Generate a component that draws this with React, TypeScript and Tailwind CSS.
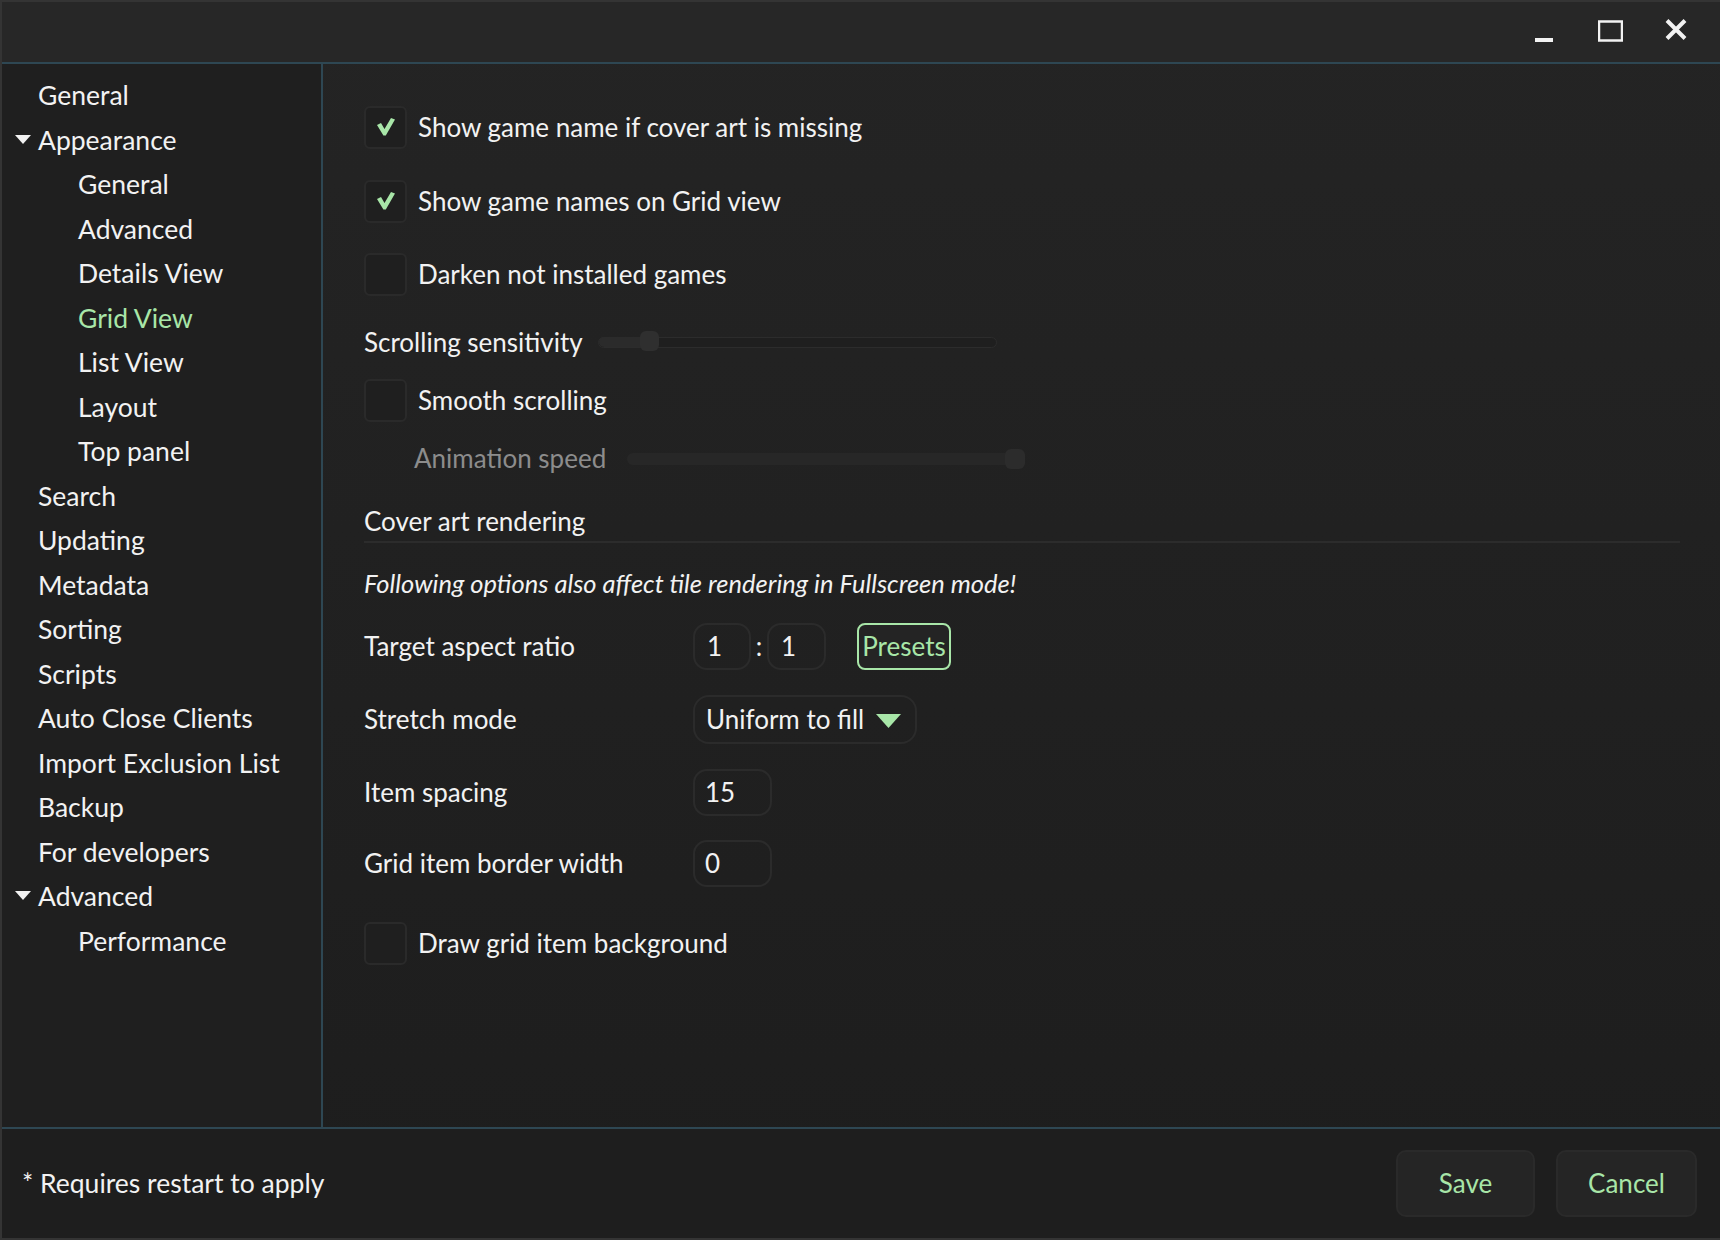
import React from "react";

function Check() {
  return (
    <svg width="18" height="18" viewBox="0 0 18 18">
      <polygon points="0,7 4,5 7.5,11 14,0 18,1.5 8.8,17.5 6.4,17.5" fill="#a8e6a8" />
    </svg>
  );
}

function CheckBox({ checked, label }: { checked?: boolean; label: string }) {
  return (
    <div className="flex items-center h-full">
      <div className="w-[43px] h-[43px] rounded-[6px] border-2 border-[#2a2a2a] bg-[#1f1f1f] flex items-center justify-center shrink-0">
        {checked ? <Check /> : null}
      </div>
      <span className="ml-[11px]">{label}</span>
    </div>
  );
}

function Tri({ color = "#f2f2f2" }: { color?: string }) {
  return (
    <svg width="16" height="9" viewBox="0 0 16 9">
      <polygon points="0,0 16,0 8,9" fill={color} />
    </svg>
  );
}

const nav: { t: string; lvl: 0 | 1; exp?: boolean; sel?: boolean }[] = [
  { t: "General", lvl: 0 },
  { t: "Appearance", lvl: 0, exp: true },
  { t: "General", lvl: 1 },
  { t: "Advanced", lvl: 1 },
  { t: "Details View", lvl: 1 },
  { t: "Grid View", lvl: 1, sel: true },
  { t: "List View", lvl: 1 },
  { t: "Layout", lvl: 1 },
  { t: "Top panel", lvl: 1 },
  { t: "Search", lvl: 0 },
  { t: "Updating", lvl: 0 },
  { t: "Metadata", lvl: 0 },
  { t: "Sorting", lvl: 0 },
  { t: "Scripts", lvl: 0 },
  { t: "Auto Close Clients", lvl: 0 },
  { t: "Import Exclusion List", lvl: 0 },
  { t: "Backup", lvl: 0 },
  { t: "For developers", lvl: 0 },
  { t: "Advanced", lvl: 0, exp: true },
  { t: "Performance", lvl: 1 },
];

export default function App() {
  return (
    <div className="w-[1720px] h-[1240px] flex flex-col bg-gradient-to-b from-[#242424] to-[#1d1d1d] border-l-2 border-t-2 border-b-2 border-[#343434] font-['Lato',sans-serif] text-[#f2f2f2] text-[26px] overflow-hidden">
      {/* Title bar */}
      <header className="h-[62px] shrink-0 flex items-start justify-end pr-[33px] bg-[#272727] border-b-2 border-[#2e4753]">
        <svg className="mt-[36px]" width="18" height="4" viewBox="0 0 18 4">
          <rect x="0" y="0" width="18" height="4" fill="#f2f2f2" />
        </svg>
        <svg className="mt-[18px] ml-[45px]" width="25" height="22" viewBox="0 0 25 22">
          <rect x="1" y="1.5" width="23" height="19" fill="none" stroke="#f2f2f2" strokeWidth="2.5" />
        </svg>
        <svg className="mt-[17px] ml-[42px]" width="22" height="21" viewBox="0 0 22 21">
          <path d="M2 1.5 L20 19.5 M20 1.5 L2 19.5" stroke="#f2f2f2" strokeWidth="4" strokeLinecap="butt" />
        </svg>
      </header>

      {/* Main */}
      <main className="flex flex-1 min-h-0">
        <aside className="w-[321px] shrink-0 border-r-2 border-[#2e4753] bg-[#1f1f1f] pt-[10px] text-[26.5px]">
          {nav.map((n, i) => (
            <div key={i} className="h-[44.5px] flex items-center relative">
              {n.exp ? (
                <div className="absolute left-[13px] top-[16px]">
                  <Tri />
                </div>
              ) : null}
              <span
                className={
                  (n.lvl === 0 ? "ml-[36px] " : "ml-[76px] ") +
                  (n.sel ? "text-[#a8e6a8]" : "text-[#f2f2f2]")
                }
              >
                {n.t}
              </span>
            </div>
          ))}
        </aside>

        <section className="flex-1 pl-[41px] pr-[40px] flex flex-col">
          <div className="h-[74px] mt-[26px]">
            <CheckBox checked label="Show game name if cover art is missing" />
          </div>
          <div className="h-[74px]">
            <CheckBox checked label="Show game names on Grid view" />
          </div>
          <div className="h-[72px]">
            <CheckBox label="Darken not installed games" />
          </div>

          {/* Scrolling sensitivity */}
          <div className="h-[64px] flex items-center">
            <span className="w-[234px] shrink-0">Scrolling sensitivity</span>
            <div className="relative w-[399px] h-[11px] rounded-full border-[1.5px] border-[#2c2c2c] bg-[#1f1f1f]">
              <div className="absolute left-0 top-[-1px] h-[10px] w-[50px] rounded-l-full bg-[#2b2b2b]" />
              <div className="absolute left-[41px] top-[-6.5px] w-[19px] h-[20px] rounded-[6px] bg-[#2f2f2f]" />
            </div>
          </div>

          <div className="h-[52px]">
            <CheckBox label="Smooth scrolling" />
          </div>

          {/* Animation speed */}
          <div className="h-[65px] flex items-center pl-[50px]">
            <span className="w-[213px] shrink-0 text-[#8c8c8c]">Animation speed</span>
            <div className="relative w-[398px] h-[12px] rounded-full bg-[#272727]">
              <div className="absolute right-0 top-[-4px] w-[20px] h-[20px] rounded-[6px] bg-[#2c2c2c]" />
            </div>
          </div>

          {/* Cover art rendering */}
          <div className="pt-[10px] border-b-2 border-[#2c2c2c]">
            <div className="h-[40px] leading-[40px]">Cover art rendering</div>
          </div>

          <div className="h-[80px] flex items-center italic text-[25.5px]">
            Following options also affect tile rendering in Fullscreen mode!
          </div>

          {/* Target aspect ratio */}
          <div className="h-[47px] flex items-center">
            <span className="w-[329px] shrink-0">Target aspect ratio</span>
            <div className="w-[58px] h-[47px] rounded-[14px] border-2 border-[#2b2b2b] flex items-center pl-[12px]">1</div>
            <span className="w-[16px] text-center">:</span>
            <div className="w-[59px] h-[47px] rounded-[14px] border-2 border-[#2b2b2b] flex items-center pl-[12px]">1</div>
            <div className="ml-[31px] w-[94px] h-[47px] rounded-[8px] border-2 border-[#a8e6a8] bg-[#242424] flex items-center justify-center text-[#a8e6a8]">
              Presets
            </div>
          </div>

          {/* Stretch mode */}
          <div className="mt-[25px] h-[49px] flex items-center">
            <span className="w-[329px] shrink-0">Stretch mode</span>
            <div className="w-[224px] h-[49px] rounded-[16px] border-2 border-[#2b2b2b] flex items-center pl-[11px]">
              <span>Uniform to fill</span>
              <svg className="ml-[12px] mt-[2px]" width="25" height="14" viewBox="0 0 25 14">
                <polygon points="0,0 25,0 12.5,14" fill="#a8e6a8" />
              </svg>
            </div>
          </div>

          {/* Item spacing */}
          <div className="mt-[25px] h-[47px] flex items-center">
            <span className="w-[329px] shrink-0">Item spacing</span>
            <div className="w-[79px] h-[47px] rounded-[14px] border-2 border-[#2b2b2b] flex items-center pl-[10px]">15</div>
          </div>

          {/* Grid item border width */}
          <div className="mt-[24px] h-[47px] flex items-center">
            <span className="w-[329px] shrink-0">Grid item border width</span>
            <div className="w-[79px] h-[47px] rounded-[14px] border-2 border-[#2b2b2b] flex items-center pl-[10px]">0</div>
          </div>

          <div className="mt-[35px] h-[43px]">
            <CheckBox label="Draw grid item background" />
          </div>
        </section>
      </main>

      {/* Footer */}
      <footer className="h-[111px] shrink-0 border-t-2 border-[#2e4753] bg-[#1e1e1e] flex items-center pl-[20px] pr-[23px]">
        <span className="flex-1 text-[26.5px]">* Requires restart to apply</span>
        <button className="w-[139px] h-[67px] rounded-[10px] border-2 border-[#2a2a2a] bg-[#252525] text-[#a8e6a8]">Save</button>
        <button className="ml-[21px] w-[141px] h-[67px] rounded-[10px] border-2 border-[#2a2a2a] bg-[#252525] text-[#a8e6a8]">Cancel</button>
      </footer>
    </div>
  );
}
